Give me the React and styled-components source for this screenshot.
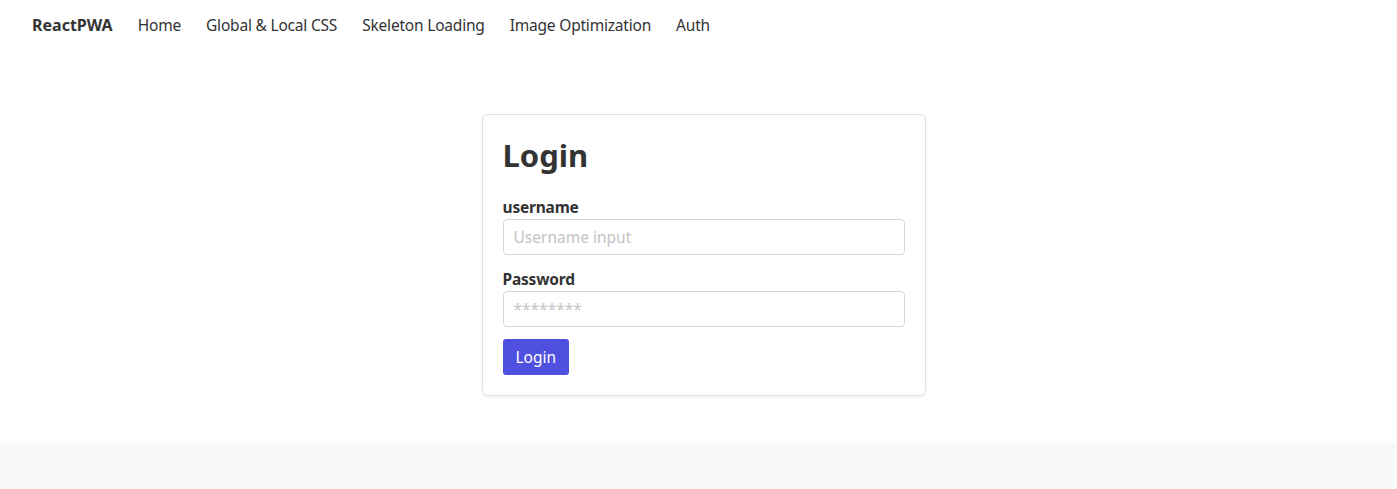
import React from 'react';
import styled, { createGlobalStyle } from 'styled-components';

const GlobalStyle = createGlobalStyle`
  html, body {
    margin: 0;
    padding: 0;
    background: #fff;
    font-family: 'Noto Sans', 'Open Sans', sans-serif;
    color: #333;
  }
  * {
    box-sizing: border-box;
  }
`;

const Page = styled.div`
  display: flex;
  flex-direction: column;
  min-height: 489px;
`;

const NavBar = styled.nav`
  display: flex;
  align-items: center;
  gap: 25px;
  height: 50px;
  padding: 0 32px;
`;

const NavLink = styled.a`
  font-size: ${props => (props.brand ? '16px' : '15.5px')};
  font-weight: ${props => (props.brand ? 700 : 400)};
  letter-spacing: ${props => (props.brand ? '0' : '-0.2px')};
  color: #333;
  text-decoration: none;
`;

const Main = styled.main`
  display: flex;
  justify-content: center;
  padding: 64px 0 47px 10px;
`;

const Card = styled.form`
  display: flex;
  flex-direction: column;
  width: 444px;
  padding: 20px 20px 20px;
  border: 1px solid #e0e0e0;
  border-radius: 6px;
  box-shadow: 0 1px 3px rgba(0, 0, 0, 0.08);
  background: #fff;
`;

const Title = styled.h1`
  margin: 0 0 22px;
  font-size: 31px;
  line-height: 40px;
  font-weight: 700;
  color: #333;
`;

const Field = styled.div`
  display: flex;
  flex-direction: column;
  gap: 2px;
  margin-bottom: 14px;
  &:last-of-type {
    margin-bottom: 12px;
  }
`;

const Label = styled.label`
  font-size: 15.5px;
  line-height: 20px;
  font-weight: 700;
  color: #333;
  letter-spacing: -0.2px;
`;

const Input = styled.input`
  height: 36px;
  padding: 0 10px;
  border: 1px solid #d4d4d4;
  border-radius: 4px;
  font-family: inherit;
  font-size: 15.5px;
  color: #333;
  outline: none;
  &::placeholder {
    color: #c4c4c4;
  }
`;

const Button = styled.button`
  align-self: flex-start;
  height: 36px;
  padding: 0 13px;
  border: none;
  border-radius: 3px;
  background: #4f4fe0;
  color: #fff;
  font-family: inherit;
  font-size: 15.5px;
  cursor: pointer;
`;

const Footer = styled.footer`
  flex: 1;
  background: #f9f9f9;
`;

const links = ['Home', 'Global & Local CSS', 'Skeleton Loading', 'Image Optimization', 'Auth'];

export default function App() {
  return (
    <>
      <GlobalStyle />
      <Page>
        <NavBar>
          <NavLink brand href="#">ReactPWA</NavLink>
          {links.map(l => (
            <NavLink key={l} href="#">{l}</NavLink>
          ))}
        </NavBar>
        <Main>
          <Card onSubmit={e => e.preventDefault()}>
            <Title>Login</Title>
            <Field>
              <Label htmlFor="username">username</Label>
              <Input id="username" placeholder="Username input" />
            </Field>
            <Field>
              <Label htmlFor="password">Password</Label>
              <Input id="password" type="password" placeholder="********" />
            </Field>
            <Button type="submit">Login</Button>
          </Card>
        </Main>
        <Footer />
      </Page>
    </>
  );
}
